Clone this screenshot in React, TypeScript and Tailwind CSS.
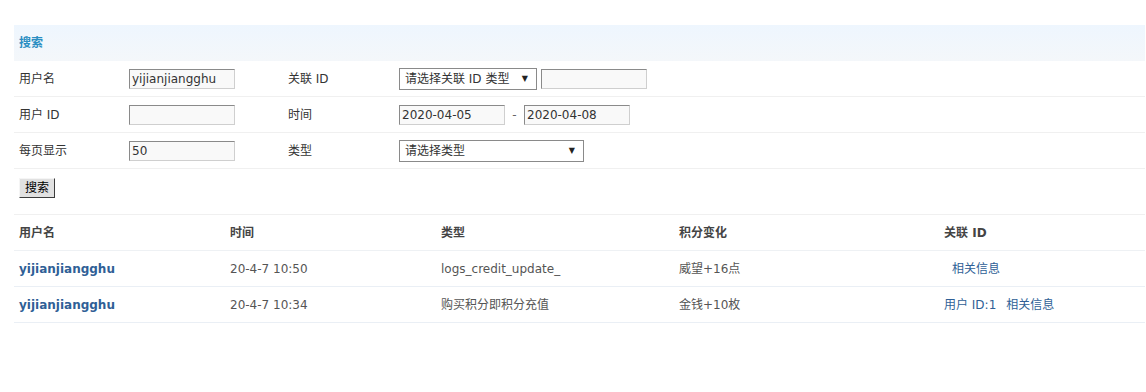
import React from 'react';

const font = { fontFamily: '"DejaVu Sans", "Noto Sans CJK SC", sans-serif' };

interface CreditLog {
  user: string;
  time: string;
  type: string;
  change: string;
  relUser?: string;
}

const logs: CreditLog[] = [
  { user: 'yijianjiangghu', time: '20-4-7 10:50', type: 'logs_credit_update_', change: '威望+16点' },
  { user: 'yijianjiangghu', time: '20-4-7 10:34', type: '购买积分即积分充值', change: '金钱+10枚', relUser: '用户 ID:1' },
];

function TextInput({ value = '', width = 'w-[106px]' }: { value?: string; width?: string }) {
  return (
    <div
      className={`${width} h-[20px] flex items-center px-[2px] bg-[#f9f9f9] border border-t-[#8a8a8a] border-l-[#8a8a8a] border-r-[#cfcfcf] border-b-[#cfcfcf] text-[12px] text-[#333] leading-none`}
    >
      {value}
    </div>
  );
}

function FakeSelect({ label, width }: { label: string; width: string }) {
  return (
    <div
      className={`${width} h-[22px] flex items-center justify-between pl-[5px] pr-[8px] bg-white border border-[#8a8a8a] text-[12px] text-[#333] leading-none`}
    >
      <span>{label}</span>
      <span className="text-[8px] text-[#222]">▼</span>
    </div>
  );
}

function FormRow({ children }: { children: React.ReactNode }) {
  return <div className="flex items-center h-[36px] border-b border-[#f0f0f0]">{children}</div>;
}

export default function App() {
  return (
    <div className="bg-white w-[1146px] h-[392px] pt-[25px] pl-[14px] overflow-hidden text-[12px] text-[#333]" style={font}>
      <div className="w-[1131px]">
        {/* Search header */}
        <div className="h-[36px] flex items-center pl-[5px] bg-gradient-to-b from-[#eef6fe] to-[#f4f7fa]">
          <span className="font-bold text-[#2a8ec2]">搜索</span>
        </div>

        <FormRow>
          <div className="w-[110px] pl-[5px]">用户名</div>
          <div className="w-[159px] pl-[5px]">
            <TextInput value="yijianjiangghu" />
          </div>
          <div className="w-[111px] pl-[5px]">关联 ID</div>
          <div className="flex items-center gap-[4px] pl-[5px]">
            <FakeSelect label="请选择关联 ID 类型" width="w-[138px]" />
            <TextInput />
          </div>
        </FormRow>

        <FormRow>
          <div className="w-[110px] pl-[5px]">用户 ID</div>
          <div className="w-[159px] pl-[5px]">
            <TextInput />
          </div>
          <div className="w-[111px] pl-[5px]">时间</div>
          <div className="flex items-center pl-[5px]">
            <TextInput value="2020-04-05" />
            <span className="w-[19px] text-center text-[#666]">-</span>
            <TextInput value="2020-04-08" />
          </div>
        </FormRow>

        <FormRow>
          <div className="w-[110px] pl-[5px]">每页显示</div>
          <div className="w-[159px] pl-[5px]">
            <TextInput value="50" />
          </div>
          <div className="w-[111px] pl-[5px]">类型</div>
          <div className="pl-[5px]">
            <FakeSelect label="请选择类型" width="w-[185px]" />
          </div>
        </FormRow>

        <div className="h-[46px] pl-[5px] pt-[9px] border-b border-[#f0f0f0]">
          <button className="h-[20px] w-[36px] flex items-center justify-center bg-[#e1e1e1] border border-t-[#f5f5f5] border-l-[#f5f5f5] border-r-[#3c3c3c] border-b-[#3c3c3c] text-[12px] text-black leading-none">
            搜索
          </button>
        </div>

        {/* Result table */}
        <div className="flex h-[36px] items-center border-b border-[#eef1f4] font-bold text-[#444]">
          <div className="w-[211px] pl-[5px]">用户名</div>
          <div className="w-[211px] pl-[5px]">时间</div>
          <div className="w-[238px] pl-[5px]">类型</div>
          <div className="w-[265px] pl-[5px]">积分变化</div>
          <div className="flex-1 pl-[5px]">关联 ID</div>
        </div>

        {logs.map((log, i) => (
          <div key={i} className="flex h-[36px] items-center border-b border-[#eaeff5] text-[#555]">
            <div className="w-[211px] pl-[5px] font-bold text-[#2f5f96]">{log.user}</div>
            <div className="w-[211px] pl-[5px]">{log.time}</div>
            <div className="w-[238px] pl-[5px]">{log.type}</div>
            <div className="w-[265px] pl-[5px]">{log.change}</div>
            <div className="flex-1 pl-[5px] text-[#2f5f96] flex gap-[10px]">
              {log.relUser ? (
                <>
                  <span>{log.relUser}</span>
                  <span>相关信息</span>
                </>
              ) : (
                <span className="pl-[8px]">相关信息</span>
              )}
            </div>
          </div>
        ))}
      </div>
    </div>
  );
}
